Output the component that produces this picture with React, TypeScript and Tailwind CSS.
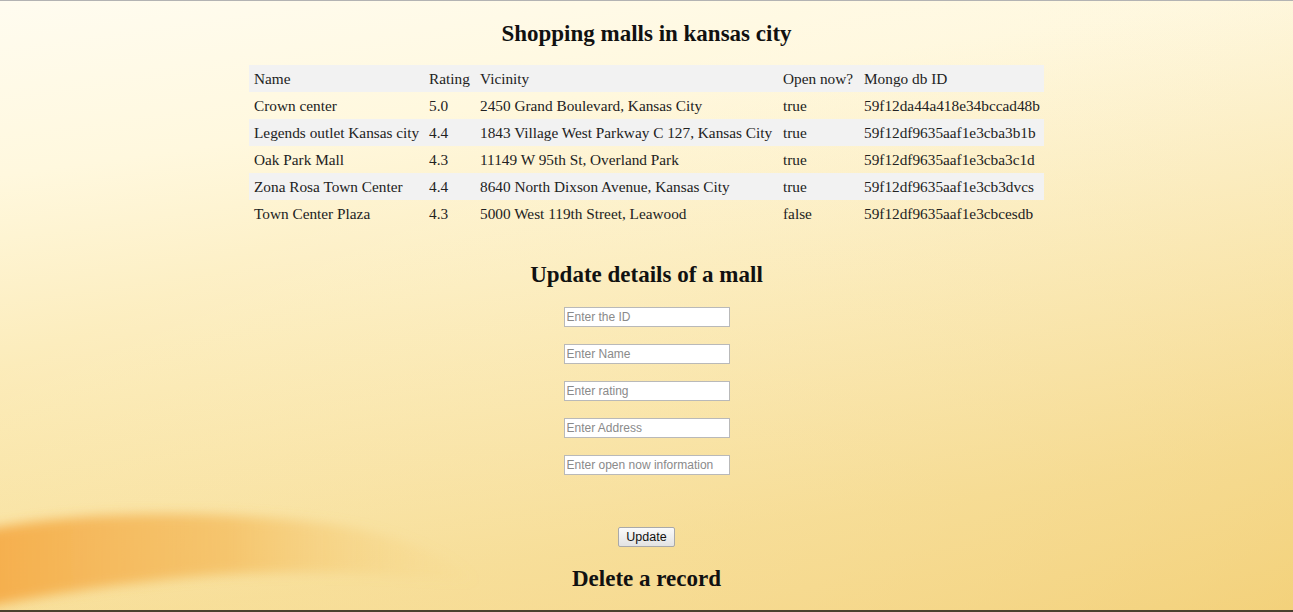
const malls = [
  { name: "Crown center", rating: "5.0", vicinity: "2450 Grand Boulevard, Kansas City", open: "true", id: "59f12da44a418e34bccad48b" },
  { name: "Legends outlet Kansas city", rating: "4.4", vicinity: "1843 Village West Parkway C 127, Kansas City", open: "true", id: "59f12df9635aaf1e3cba3b1b" },
  { name: "Oak Park Mall", rating: "4.3", vicinity: "11149 W 95th St, Overland Park", open: "true", id: "59f12df9635aaf1e3cba3c1d" },
  { name: "Zona Rosa Town Center", rating: "4.4", vicinity: "8640 North Dixson Avenue, Kansas City", open: "true", id: "59f12df9635aaf1e3cb3dvcs" },
  { name: "Town Center Plaza", rating: "4.3", vicinity: "5000 West 119th Street, Leawood", open: "false", id: "59f12df9635aaf1e3cbcesdb" },
];

const fields = ["Enter the ID", "Enter Name", "Enter rating", "Enter Address", "Enter open now information"];

export default function App() {
  return (
    <div className="relative h-[612px] overflow-hidden border-t border-b-2 border-t-[#b3b3b3] border-b-[#4a4030] bg-[linear-gradient(172deg,#fffcf0_0%,#fff8de_22%,#fbe9b2_52%,#f7db8c_80%,#f7d47e_100%)] font-['Liberation_Serif',serif] text-[#222]">
      {/* background swoosh */}
      <svg className="pointer-events-none absolute inset-0 h-full w-full" viewBox="0 0 1293 612" preserveAspectRatio="none">
        <defs>
          <linearGradient id="sw" x1="0" x2="1" y1="0" y2="0">
            <stop offset="0" stopColor="#f5a43c" stopOpacity="0.85" />
            <stop offset="0.5" stopColor="#f3b24c" stopOpacity="0.6" />
            <stop offset="1" stopColor="#f6d27a" stopOpacity="0" />
          </linearGradient>
          <linearGradient id="rt" x1="0" x2="1" y1="0" y2="1">
            <stop offset="0.3" stopColor="#ffffff" stopOpacity="0" />
            <stop offset="1" stopColor="#f0cf78" stopOpacity="0.55" />
          </linearGradient>
          <filter id="blur" x="-10%" y="-50%" width="120%" height="200%">
            <feGaussianBlur stdDeviation="6" />
          </filter>
        </defs>
        <rect x="0" y="0" width="1293" height="612" fill="url(#rt)" />
        <g filter="url(#blur)">
          <path d="M-20 532 C80 512 200 512 300 522 C380 530 440 550 480 585 C400 575 300 570 200 578 C120 585 40 598 -20 610 Z" fill="url(#sw)" />
        </g>
      </svg>

      <div className="relative flex flex-col items-center">
        <h2 className="mt-[18px] text-[23px] leading-[30px] font-bold text-[#111]">Shopping malls in kansas city</h2>

        <table className="mt-[16px] w-[795px] table-fixed border-collapse text-[15.3px] leading-[27px]">
          <thead>
            <tr className="bg-[#f2f2f2]">
              <th className="w-[175px] pl-[5px] text-left font-normal">Name</th>
              <th className="w-[51px] pl-[5px] text-left font-normal">Rating</th>
              <th className="w-[303px] pl-[5px] text-left font-normal">Vicinity</th>
              <th className="w-[81px] pl-[5px] text-left font-normal">Open now?</th>
              <th className="pl-[5px] text-left font-normal">Mongo db ID</th>
            </tr>
          </thead>
          <tbody>
            {malls.map((m, i) => (
              <tr key={m.id} className={i % 2 === 1 ? "bg-[#f2f2f2]" : ""}>
                <td className="pl-[5px] whitespace-nowrap">{m.name}</td>
                <td className="pl-[5px] whitespace-nowrap">{m.rating}</td>
                <td className="pl-[5px] whitespace-nowrap">{m.vicinity}</td>
                <td className="pl-[5px] whitespace-nowrap">{m.open}</td>
                <td className="pl-[5px] whitespace-nowrap">{m.id}</td>
              </tr>
            ))}
          </tbody>
        </table>

        <h2 className="mt-[33px] text-[23px] leading-[30px] font-bold text-[#111]">Update details of a mall</h2>

        <div className="mt-[17px] flex flex-col gap-[17px]">
          {fields.map((f) => (
            <input
              key={f}
              placeholder={f}
              className="h-[20px] w-[166px] border border-[#b9b9b9] bg-white px-[2px] font-['Liberation_Sans',Arial,sans-serif] text-[12px] text-[#222] placeholder:text-[#8a8a8a]"
            />
          ))}
        </div>

        <button className="mt-[52px] h-[20px] w-[57px] rounded-[2px] border border-[#a9a9a9] bg-[linear-gradient(#fafafa,#e3e3e3)] font-['Liberation_Sans',Arial,sans-serif] text-[12.5px] text-[#111]">
          Update
        </button>

        <h2 className="mt-[17px] text-[23px] leading-[30px] font-bold text-[#111]">Delete a record</h2>
      </div>
    </div>
  );
}
